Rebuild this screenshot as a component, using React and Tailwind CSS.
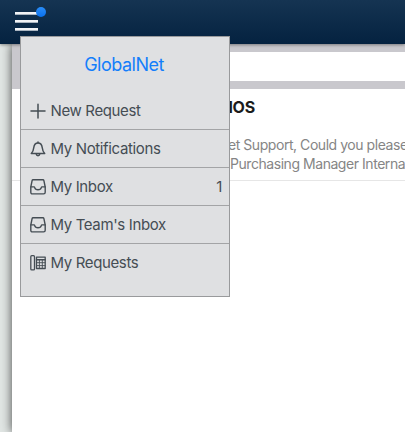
const stroke = {
  fill: 'none',
  stroke: '#454d54',
  strokeWidth: 1.4,
  strokeLinecap: 'round',
  strokeLinejoin: 'round',
};

function PlusIcon() {
  return (
    <svg width="18" height="18" viewBox="0 0 18 18" {...stroke} strokeWidth="1.5">
      <path d="M9 2.200v13.800M2 9h14" />
    </svg>
  );
}

function BellIcon() {
  return (
    <svg width="18" height="18" viewBox="0 0 18 18" {...stroke} strokeWidth="1.500">
      <path d="M2.300 13.500c1.800-1.700 2.200-3.300 2.500-6C5.100 4.800 6.700 3 9 3s3.900 1.800 4.200 4.500c.3 2.700.7 4.300 2.500 6z" />
      <path d="M9 2.800V2M7.300 14.200c.2 1.900 3.200 1.900 3.400 0" />
    </svg>
  );
}

function TrayIcon() {
  return (
    <svg width="18" height="18" viewBox="0 0 18 18" {...stroke}>
      <path d="M4.200 1.700h9.600c.6 0 1 .3 1.100.9L16.200 9v5.300c0 1-.6 1.600-1.600 1.600H3.400c-1 0-1.600-.6-1.600-1.600V9l1.300-6.400c.1-.6.5-.9 1.100-.9z" />
      <path d="M2 8.900h3c.5 0 .6.300.7.700.4 1.500 1.500 2.200 3.300 2.200s2.900-.7 3.300-2.200c.1-.4.200-.7.700-.7h3" />
    </svg>
  );
}

function FaxIcon() {
  return (
    <svg width="18" height="18" viewBox="0 0 18 18" {...stroke} strokeWidth="1.300">
      <rect x="1.800" y="1.700" width="3.700" height="14.200" rx="1" />
      <path d="M7.500 3.200h8.700v11.300H7.500z" />
      <path d="M7.500 5.800h8.700" strokeWidth="1.500" />
      <path d="M8 8.700h8M8 11.600h8M10.400 6v8M13.300 6v8" strokeWidth=".9" />
    </svg>
  );
}

const items = [
  { label: 'New Request', Icon: PlusIcon },
  { label: 'My Notifications', Icon: BellIcon },
  { label: 'My Inbox', Icon: TrayIcon, count: 1 },
  { label: "My Team's Inbox", Icon: TrayIcon },
  { label: 'My Requests', Icon: FaxIcon },
];

function Menu() {
  return (
    <nav className="absolute left-5 top-9 z-20 h-[261px] w-[210px] border border-[#999a9c] bg-[#dfe0e2] text-[#454d54]">
      <h1 className="h-[55px] pr-0.5 pt-[14px] text-center text-[18px] leading-7 tracking-[-0.5px] text-[#147efb]">
        GlobalNet
      </h1>
      <ul>
        {items.map(({ label, Icon, count }) => (
          <li
            key={label}
            className="flex h-[38px] items-center border-b border-[#a3a4a6] pl-2 pr-[7px] text-[15px] leading-5 tracking-[-0.36px] last:border-b-0"
          >
            <Icon />
            <span className="ml-[3.5px] flex-1 whitespace-nowrap">{label}</span>
            {count && <span>{count}</span>}
          </li>
        ))}
      </ul>
    </nav>
  );
}

export default function App() {
  return (
    <div className="relative flex h-[432px] w-[405px] flex-col overflow-hidden bg-[#e1e6e4] font-['Inter','Liberation_Sans',sans-serif]">
      <header className="relative z-10 h-11 shrink-0 bg-linear-to-b from-[#153452] to-[#052240] pl-[15px] pt-[11.500px] shadow-[0_1px_3px_rgba(0,0,0,0.4)]">
        <div className="relative flex w-[23px] flex-col gap-[5px]">
          <i className="h-[3px] border-b border-[#a9b4c0] bg-[#f1f3f6]" />
          <i className="h-[3px] border-b border-[#a9b4c0] bg-[#f1f3f6]" />
          <i className="h-[3px] border-b border-[#a9b4c0] bg-[#f1f3f6]" />
          <b className="absolute -top-[5px] left-[21px] size-[10px] rounded-full bg-linear-to-b from-[#298df8] to-[#0870ed]" />
        </div>
      </header>
      <main className="ml-3 flex-1 bg-white shadow-[0_0_10px_rgba(0,0,0,0.7)]">
        <div className="h-[45px] bg-[#c9c8cd] py-2 pl-2">
          <div className="h-[29px] bg-white" />
        </div>
        <article className="h-[92px] border-b border-[#e6e6e6] text-[14px] tracking-[-0.45px]">
          <h2 className="pl-[206px] pt-[6px] text-[16px] font-bold leading-6 tracking-[-0.300px] text-[#1b1b1b]">MOS</h2>
          <p className="whitespace-nowrap pl-[216px] pt-4 leading-[19px] text-[#858585]">et Support, Could you please</p>
          <p className="whitespace-nowrap pl-[218px] leading-[19px] text-[#858585]">Purchasing Manager Interna</p>
        </article>
      </main>
      <Menu />
    </div>
  );
}
